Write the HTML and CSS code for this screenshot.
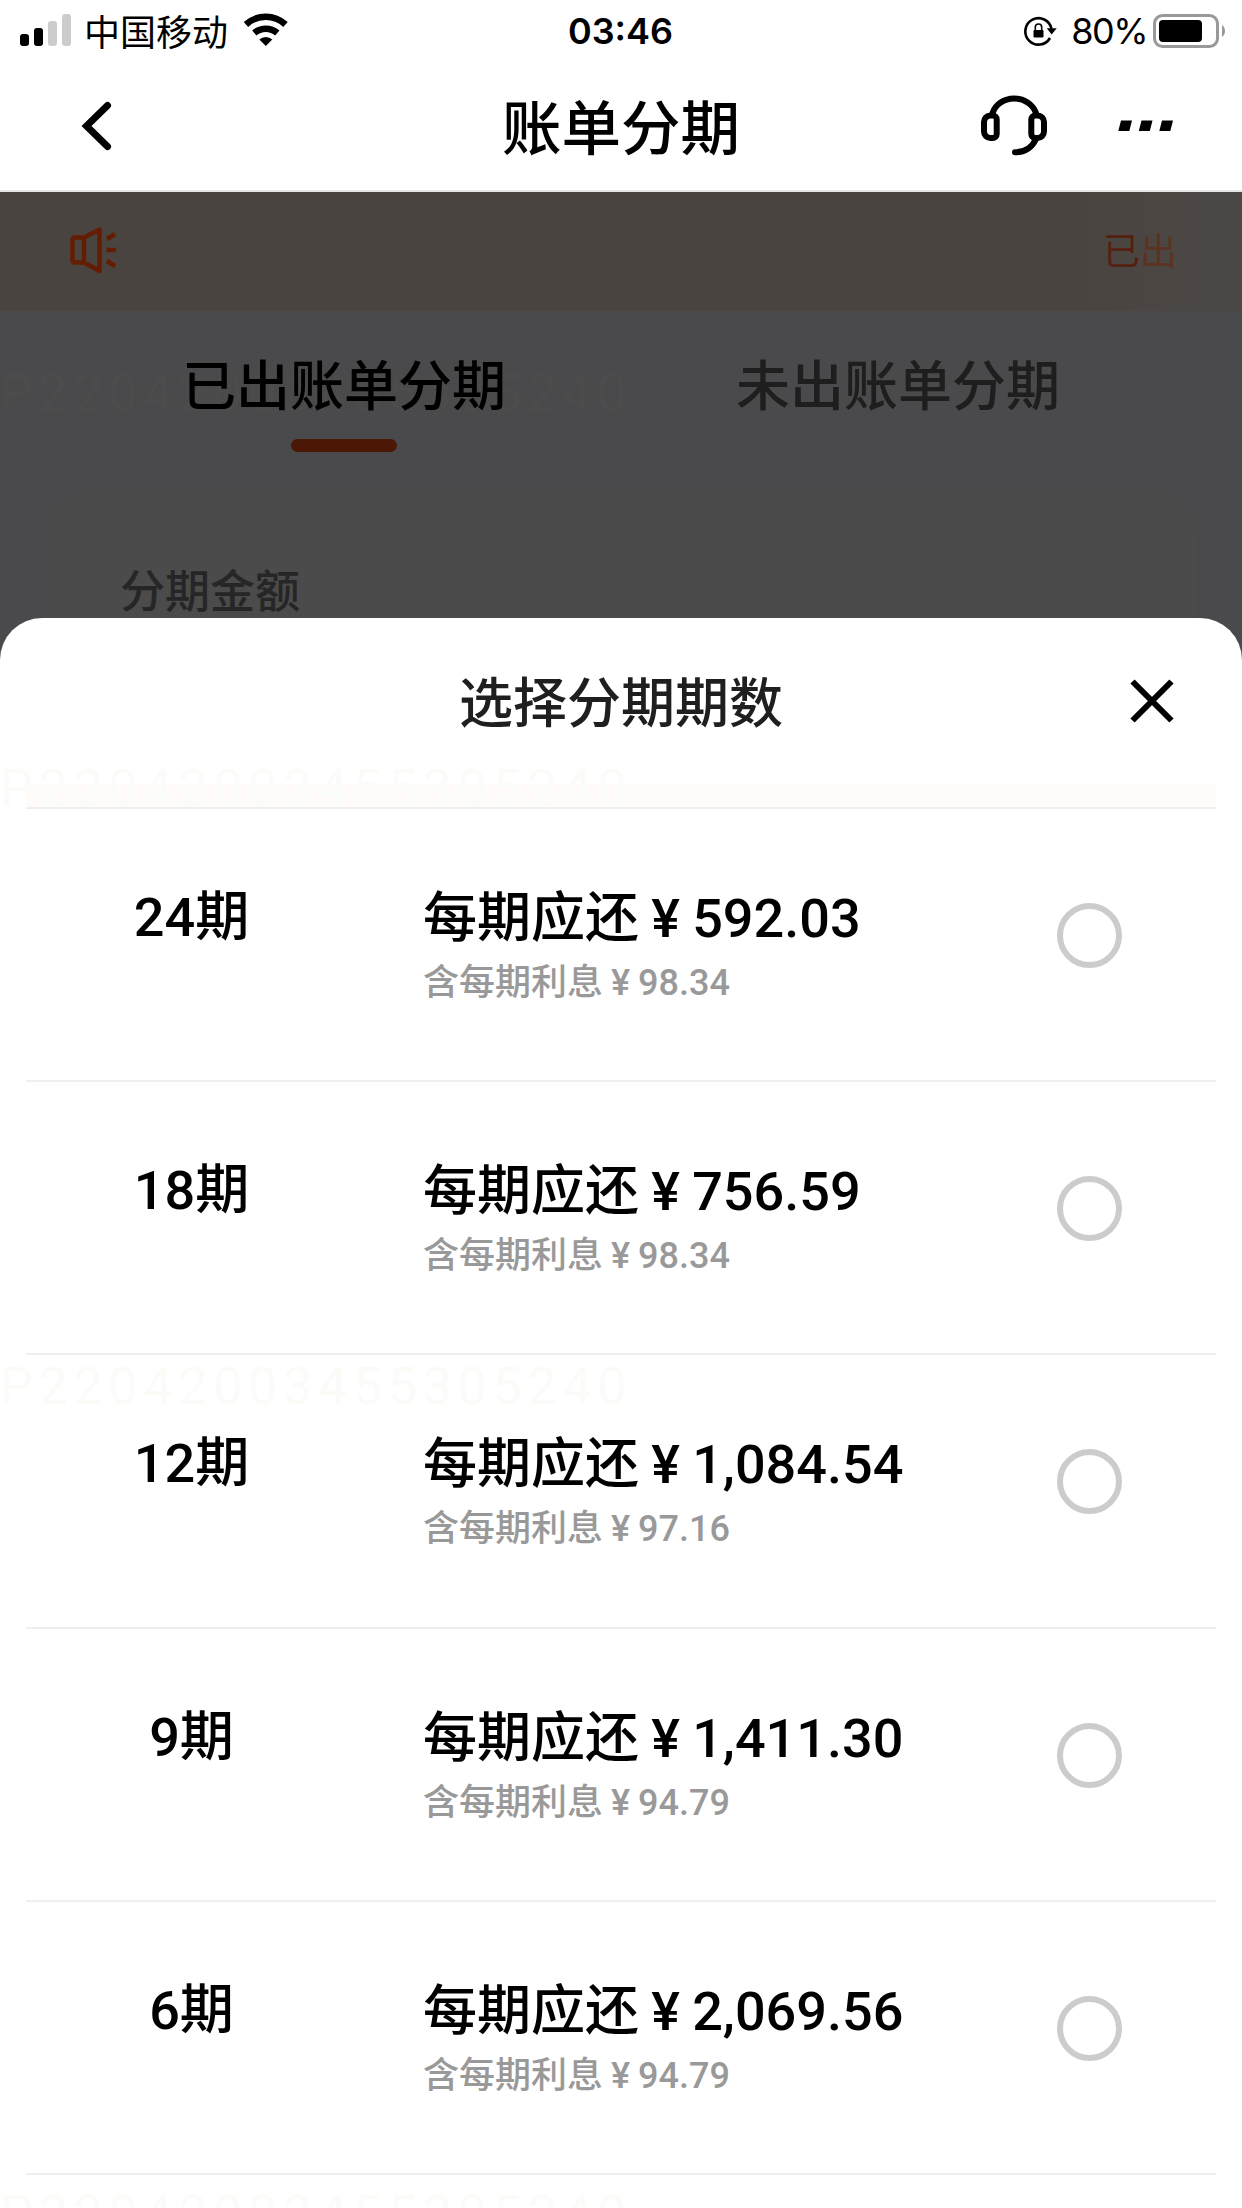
FILE: index.html
```html
<!DOCTYPE html>
<html lang="zh-CN">
<head>
<meta charset="utf-8">
<title>账单分期</title>
<link rel="stylesheet" href="styles.css">
</head>
<body>
<div class="screen">
  <header class="top">
    <div class="status">
      <div class="status-left">
        <svg class="signal" width="52" height="32" viewBox="0 0 52 32"><rect x="0" y="20" width="9" height="12" rx="3"/><rect x="14" y="14" width="9" height="18" rx="3"/><rect class="dim" x="28" y="7" width="9" height="25" rx="3"/><rect class="dim" x="42" y="0" width="9" height="32" rx="3"/></svg>
        <span class="carrier">中国移动</span>
        <svg class="wifi" width="46" height="34" viewBox="0 0 46 34"><path d="M3 11.500a29 29 0 0 1 39.500 0M11.300 20a17.500 17.500 0 0 1 23 0"/><path class="solid" d="M22.800 33l-6.500-6.500a9.500 9.500 0 0 1 13 0z"/></svg>
      </div>
      <time class="clock">03:46</time>
      <div class="status-right">
        <svg class="lock" width="34" height="32" viewBox="0 0 34 32"><path class="ring" d="M27.500 13.800A13.200 13.200 0 1 0 26 23"/><path d="M22.700 13.200h10l-5 6.300z"/><rect x="9.500" y="15" width="10" height="7.500" rx="1.200"/><path class="shackle" d="M11.300 15.500v-3.300a3.200 3.200 0 0 1 6.400 0v3.300"/></svg>
        <span class="percent">80%</span>
        <svg class="battery" width="74" height="34" viewBox="0 0 74 34"><rect class="shell" x="1.500" y="1.500" width="63" height="31" rx="8"/><rect x="6" y="6" width="43" height="22" rx="4"/><path class="nub" d="M69 11a7.500 7.500 0 0 1 0 12z"/></svg>
      </div>
    </div>
    <nav class="nav">
      <svg class="back" width="34" height="52" viewBox="0 0 34 52"><path d="M27.500 5.500L6.500 26l21 20.500"/></svg>
      <h1 class="nav-title">账单分期</h1>
      <div class="nav-actions">
        <svg class="headset" width="68" height="62" viewBox="0 0 68 62"><path d="M12.500 18C15.500 9.500 24 3.500 34 3.500S53 9.500 56 18M56 44c-4 8.500-11 13.300-21 13.300"/><path d="M10.500 20.500h2.200a4 4 0 0 1 4 4V39a4 4 0 0 1-4 4h-2.200a6.500 6.500 0 0 1-6.500-6.500V27a6.500 6.500 0 0 1 6.500-6.500zM57.500 20.500h-2.200a4 4 0 0 0-4 4V39a4 4 0 0 0 4 4h2.200a6.500 6.500 0 0 0 6.500-6.500V27a6.500 6.500 0 0 0-6.500-6.500z"/></svg>
        <svg class="more" width="56" height="12" viewBox="0 0 56 12"><path d="M3 .5h11l-2.700 10.500H.3zM23.500 .5h11l-2.700 10.500h-11zM44 .5h11l-2.700 10.500h-11z"/></svg>
      </div>
    </nav>
  </header>

  <main class="backdrop">
    <div class="notice">
      <svg class="speaker" width="48" height="48" viewBox="0 0 48 48"><path d="M14 11.500H4.500a2 2 0 0 0-2 2v21a2 2 0 0 0 2 2H14L29.500 45V3.500zM14 11.500v25M37 13l8-5M36.500 24H46M37 35l8 5"/></svg>
      <span class="notice-text">已<span class="fading">出</span></span>
    </div>
    <div class="tabs">
      <span class="watermark">P22042003455305240</span>
      <div class="tab active">已出账单分期</div>
      <div class="tab">未出账单分期</div>
    </div>
    <section class="card">分期金额</section>
  </main>

  <section class="sheet">
    <span class="watermark wm-head">P22042003455305240</span>
    <span class="watermark wm-list">P22042003455305240</span>
    <span class="watermark wm-foot">P22042003455305240</span>
    <div class="sheet-head">
      <h2 class="sheet-title">选择分期期数</h2>
      <svg class="close" width="46" height="46" viewBox="0 0 46 46"><path d="M3.500 3.500l39 39M42.500 3.500l-39 39"/></svg>
    </div>
    <div class="strip"></div>
    <ul class="plans">
      <li class="plan"><span class="term">24期</span><div class="detail"><p class="amount">每期应还 ¥ 592.03</p><p class="interest">含每期利息 ¥ 98.34</p></div><i class="radio"></i></li>
      <li class="plan"><span class="term">18期</span><div class="detail"><p class="amount">每期应还 ¥ 756.59</p><p class="interest">含每期利息 ¥ 98.34</p></div><i class="radio"></i></li>
      <li class="plan"><span class="term">12期</span><div class="detail"><p class="amount">每期应还 ¥ 1,084.54</p><p class="interest">含每期利息 ¥ 97.16</p></div><i class="radio"></i></li>
      <li class="plan"><span class="term">9期</span><div class="detail"><p class="amount">每期应还 ¥ 1,411.30</p><p class="interest">含每期利息 ¥ 94.79</p></div><i class="radio"></i></li>
      <li class="plan"><span class="term">6期</span><div class="detail"><p class="amount">每期应还 ¥ 2,069.56</p><p class="interest">含每期利息 ¥ 94.79</p></div><i class="radio"></i></li>
    </ul>
  </section>
</div>
</body>
</html>
```

FILE: styles.css
```css
* { box-sizing: border-box; margin: 0; padding: 0; }

body {
  width: 1242px;
  height: 2208px;
  overflow: hidden;
  background: #fff;
  color: #000;
  font-family: Roboto, "Noto Sans CJK SC", sans-serif;
}

svg { display: block; flex: none; }

.screen { height: 2208px; overflow: hidden; display: flex; flex-direction: column; }

/* status bar and navigation */
.top { height: 192px; flex: none; border-bottom: 2px solid #e6e6e6; background: #fff; }

.status {
  height: 62px;
  display: grid;
  grid-template-columns: 1fr auto 1fr;
  align-items: center;
  padding: 0 15px 0 20px;
}
.status-left, .status-right { display: flex; align-items: center; }
.status-left { padding-bottom: 2px; }
.status-right { justify-content: flex-end; }
.signal .dim { fill: #ccc; }
.carrier { margin-left: 12px; font: 400 36px/38px "Noto Sans CJK SC", sans-serif; }
.wifi { margin-left: 15px; }
.wifi path { fill: none; stroke: #000; stroke-width: 6.500; }
.wifi .solid { fill: #000; stroke: none; }
.clock { margin-right: 6px; font: 600 36px/40px Inter, sans-serif; }
.percent { margin: 0 6px 0 13px; font: 400 36px/40px Inter, sans-serif; letter-spacing: -1.500px; }
.lock .ring { fill: none; stroke: #000; stroke-width: 2.600; }
.lock .shackle { fill: none; stroke: #000; stroke-width: 1.600; }
.battery .shell { fill: none; stroke: #999; stroke-width: 3; }
.battery .nub { fill: #999; }

.nav {
  height: 128px;
  display: grid;
  grid-template-columns: 1fr auto 1fr;
  align-items: center;
  padding: 0 68px 0 80px;
}
.back path { fill: none; stroke: #000; stroke-width: 7; stroke-linecap: round; }
.nav-title { margin-right: 12px; padding-bottom: 4px; font: 500 59.500px/68px "Noto Sans CJK SC", sans-serif; }
.nav-actions { display: flex; align-items: center; justify-content: flex-end; gap: 70px; }
.headset path { fill: none; stroke: #000; stroke-width: 6; stroke-linecap: round; }

/* dimmed page behind the sheet */
.backdrop { height: 468px; flex: none; background: #4a4a4c; }
.notice {
  height: 119px;
  display: flex;
  align-items: center;
  justify-content: space-between;
  padding: 0 65px 3px 70px;
  background: linear-gradient(90deg, #4a4440 86%, #4b4744 96%);
}
.speaker path { fill: none; stroke: #641c02; stroke-width: 4.500; stroke-linejoin: round; }
.notice-text { padding-bottom: 3px; font: 400 37px/40px "Noto Sans CJK SC", sans-serif; color: #55200f; }
.fading { color: #5c3220; }
.tabs { position: relative; height: 180px; display: flex; padding: 0 67px; }
.tab {
  position: relative;
  flex: 1;
  display: flex;
  flex-direction: column;
  align-items: center;
  gap: 24px;
  padding-top: 40px;
  font: 500 54px/64px "Noto Sans CJK SC", sans-serif;
  color: #1e1e1e;
}
.tab.active { color: #000; }
.tab.active::after { content: ""; width: 106px; height: 13px; border-radius: 7px; background: #4a1804; }
.card {
  height: 169px;
  margin: 0 46px;
  padding: 72px 74px 0;
  border-radius: 42px 42px 0 0;
  background: #4b4b4b;
  font: 500 45px/52px "Noto Sans CJK SC", sans-serif;
  color: #262626;
}

/* bottom sheet */
.sheet {
  position: relative;
  flex: 1;
  margin-top: -42px;
  border-radius: 42px 42px 0 0;
  background: #fff;
}
.sheet-head {
  height: 166px;
  display: grid;
  grid-template-columns: 1fr auto 1fr;
  align-items: center;
  padding: 0 67px;
}
.sheet-title { grid-column: 2; padding-bottom: 3px; font: 500 54px/64px "Noto Sans CJK SC", sans-serif; color: #1f1f1f; }
.close { justify-self: end; }
.close path { stroke: #000; stroke-width: 6; }
.strip { height: 23px; margin: 0 26px; background: #fffbf9; }
.plans { margin: 0 26px; list-style: none; border-top: 2px solid #efefef; }
.plan {
  height: 273.200px;
  display: grid;
  grid-template-columns: 397px 1fr 65px;
  align-items: start;
  padding: 79px 94px 0 0;
  border-bottom: 2px solid #efefef;
}
.term { width: 331px; text-align: center; font-size: 54px; font-weight: 500; line-height: 60px; }
.amount { padding-top: 1px; font-size: 54px; font-weight: 500; line-height: 60px; word-spacing: -1.200px; }
.interest { margin-top: 13px; font-size: 36px; font-weight: 500; line-height: 42px; word-spacing: -1px; color: #999; }
.radio { width: 65px; height: 65px; margin-top: 15px; border: 6px solid #ccc; border-radius: 50%; }

/* faint trace number printed across the page */
.watermark {
  position: absolute;
  left: 0;
  top: 53px;
  font: 400 52px/60px Roboto, sans-serif;
  letter-spacing: 5.700px;
  color: #4b4c4b;
  pointer-events: none;
}
.sheet .watermark { color: #fafcf8; }
.sheet .wm-head { top: 141px; }
.sheet .wm-list { top: 739px; }
.sheet .wm-foot { top: 1567px; }
```
